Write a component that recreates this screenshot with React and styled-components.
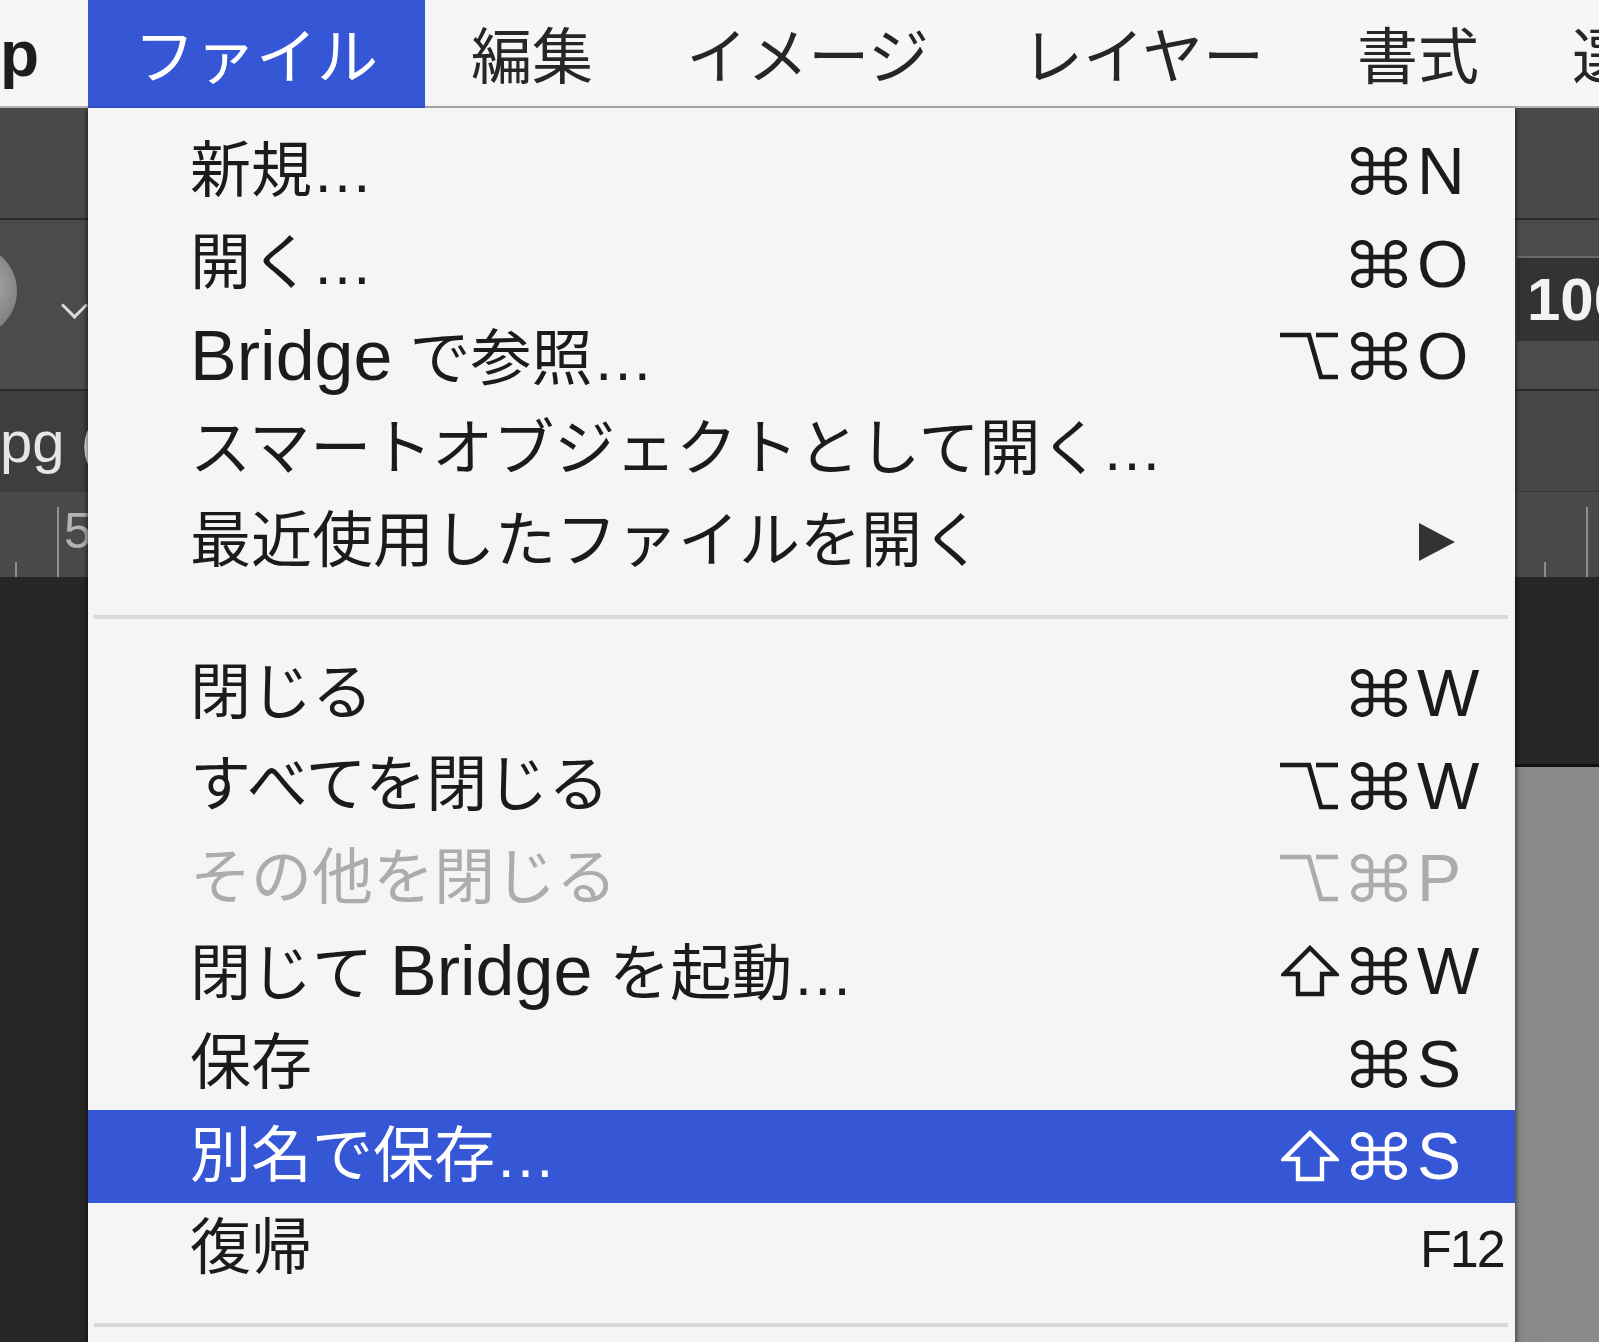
import React from "react";
import styled, { createGlobalStyle } from "styled-components";

const BLUE = "#3556d5";

const menuBarItems = ["編集", "イメージ", "レイヤー", "書式", "選択範囲", "フィルター", "表示"];

function CommandIcon() {
  return (
    <svg width="56" height="48" viewBox="0 0 56 48" fill="none" stroke="currentColor" strokeWidth="4.6">
      <path d="M36 9.625V38.375A8.875 7.375 0 1 0 44.875 31H11.125A8.875 7.375 0 1 0 20 38.375V9.625A8.875 7.375 0 1 0 11.125 17H44.875A8.875 7.375 0 1 0 36 9.625" />
    </svg>
  );
}

function OptionIcon() {
  return (
    <svg width="60" height="50" viewBox="0 0 60 50" fill="none" stroke="currentColor" strokeWidth="4.6">
      <path d="M1 4H30L42 46H59" />
      <path d="M37 4H59" />
    </svg>
  );
}

function ShiftIcon() {
  return (
    <svg width="58" height="52" viewBox="0 0 58 52" fill="none" stroke="currentColor" strokeWidth="4.4" strokeLinejoin="miter">
      <path d="M29 3L55 29H41V49H17V29H3Z" />
    </svg>
  );
}

function SubmenuArrow() {
  return (
    <svg width="40" height="42" viewBox="0 0 40 42">
      <polygon points="2,2 38,21 2,40" fill="#333" />
    </svg>
  );
}

const modIcons = { cmd: CommandIcon, opt: OptionIcon, shift: ShiftIcon };

function App() {
  const groups = getGroups();
  return (
    <>
      <GlobalStyle />
      <Screen>
        <MenuBar>
          <AppName>p</AppName>
          <BarItem $active>
            ファイル
            <Dropdown>
              {groups.map((items, gi) => (
                <React.Fragment key={gi}>
                  {gi > 0 && <Separator />}
                  {items.map((item, i) => (
                    <Row key={i} $active={item.active} $disabled={item.disabled}>
                      <Label>{item.label}</Label>
                      <Mods>
                        {(item.mods || []).map((m) => {
                          const Icon = modIcons[m];
                          return <Icon key={m} />;
                        })}
                      </Mods>
                      <KeyCell>
                        {item.key && <Key>{item.key}</Key>}
                        {item.fn && <FnKey>{item.fn}</FnKey>}
                        {item.submenu && <SubmenuArrow />}
                      </KeyCell>
                    </Row>
                  ))}
                </React.Fragment>
              ))}
            </Dropdown>
          </BarItem>
          {menuBarItems.map((t) => (
            <BarItem key={t}>{t}</BarItem>
          ))}
        </MenuBar>

        <OptionsBar />
        <ToolBar>
          <BrushPicker>
            <BrushDot />
            <Chevron />
          </BrushPicker>
          <ZoomField>100%</ZoomField>
        </ToolBar>
        <TabBar>
          <DocTab>pg (</DocTab>
        </TabBar>
        <Ruler>
          <RulerLabel>5</RulerLabel>
        </Ruler>
        <Canvas>
          <Artwork />
        </Canvas>
      </Screen>
    </>
  );
}

const GlobalStyle = createGlobalStyle`
  html, body {
    margin: 0;
    padding: 0;
  }
  body {
    background: #262626;
    font-family: "Liberation Sans", "Noto Sans CJK JP", sans-serif;
  }
`;

const Screen = styled.div`
  width: 1599px;
  height: 1342px;
  overflow: hidden;
  display: flex;
  flex-direction: column;
  background: #262626;
`;

const MenuBar = styled.div`
  position: relative;
  z-index: 2;
  display: flex;
  flex-shrink: 0;
  height: 108px;
  background: #f6f6f6;
  box-shadow: inset 0 -2px 0 #b2b2b2;
`;

const AppName = styled.div`
  display: flex;
  align-items: center;
  flex-shrink: 0;
  padding-right: 49px;
  font-size: 64px;
  font-weight: 700;
  color: #1d1d1d;
`;

const BarItem = styled.div`
  position: relative;
  display: flex;
  align-items: center;
  flex-shrink: 0;
  padding: 0 47px 4px 46px;
  white-space: nowrap;
  font-size: 61px;
  color: ${(p) => (p.$active ? "#fff" : "#262626")};
  background: ${(p) => (p.$active ? BLUE : "transparent")};
`;

const Dropdown = styled.div`
  position: absolute;
  top: 100%;
  left: 0;
  width: 1427px;
  padding-top: 17px;
  background: #f5f5f5;
  box-shadow: 0 3px 5px 1px rgba(0, 0, 0, 0.6);
`;

const Row = styled.div`
  display: grid;
  grid-template-columns: 1fr auto 84px;
  column-gap: 10px;
  align-items: center;
  height: 92.6px;
  padding: 0 14px 0 102px;
  font-size: 61px;
  color: ${(p) => (p.$active ? "#fff" : p.$disabled ? "#acacac" : "#1b1b1b")};
  background: ${(p) => (p.$active ? BLUE : "transparent")};
`;

const Label = styled.span`
  line-height: 1;
  white-space: nowrap;
`;

const Latin = styled.span`
  font-size: 70px;
`;

const Mods = styled.span`
  display: flex;
  justify-content: flex-end;
  align-items: center;
  gap: 12px;
`;

const KeyCell = styled.span`
  display: flex;
  align-items: center;
`;

const Key = styled.span`
  font-size: 66px;
  line-height: 1;
`;

const FnKey = styled.span`
  margin-left: 3px;
  font-size: 52px;
  letter-spacing: -2px;
  line-height: 1;
`;

const Separator = styled.div`
  height: 59px;
  display: flex;
  align-items: center;
  padding: 0 7px 0 6px;

  &::after {
    content: "";
    flex: 1;
    height: 4px;
    background: #d9d9d9;
  }
`;

const OptionsBar = styled.div`
  flex-shrink: 0;
  height: 110px;
  background: #4a4a4a;
  border-bottom: 2px solid #2b2b2b;
`;

const ToolBar = styled.div`
  flex-shrink: 0;
  display: grid;
  grid-template-columns: 1517px 1fr;
  height: 169px;
  background: #4b4b4b;
  border-bottom: 2px solid #2a2a2a;
`;

const BrushPicker = styled.div`
  display: flex;
  align-items: flex-start;
`;

const BrushDot = styled.div`
  width: 92px;
  height: 92px;
  margin: 25px 0 0 -75px;
  border-radius: 50%;
  background: radial-gradient(circle at 60% 45%, #b5b5b5 0%, #8a8a8a 45%, #5a5a5a 100%);
`;

const Chevron = styled.div`
  width: 16px;
  height: 16px;
  margin: 76px 0 0 48px;
  border-right: 3px solid #dcdcdc;
  border-bottom: 3px solid #dcdcdc;
  transform: rotate(45deg);
`;

const ZoomField = styled.div`
  margin-top: 36px;
  height: 83px;
  display: flex;
  align-items: center;
  padding-left: 10px;
  overflow: hidden;
  white-space: nowrap;
  background: #333;
  border-top: 2px solid #6a6a6a;
  color: #f2f2f2;
  font-size: 60px;
  font-weight: 700;
`;

const TabBar = styled.div`
  flex-shrink: 0;
  display: flex;
  height: 100px;
  background: #474747;
`;

const DocTab = styled.div`
  display: flex;
  align-items: center;
  width: 1000px;
  white-space: nowrap;
  background: #3e3e3e;
  color: #e6e6e6;
  font-size: 58px;
`;

const Ruler = styled.div`
  flex-shrink: 0;
  display: flex;
  align-items: center;
  height: 85px;
  border-top: 1px solid #3a3a3a;
  background:
    linear-gradient(to right, #8e8e8e 2px, transparent 2px) 57px 15px / 382.25px 70px repeat-x,
    linear-gradient(to right, #8e8e8e 2px, transparent 2px) 15px 70px / 382.25px 15px repeat-x,
    #4a4a4a;
`;

const RulerLabel = styled.span`
  margin-left: 64px;
  margin-bottom: 8px;
  color: #b4b4b4;
  font-size: 50px;
`;

const Canvas = styled.div`
  flex: 1;
  display: flex;
  justify-content: flex-end;
  padding-top: 187px;
  background: #262626;
`;

const Artwork = styled.div`
  width: 900px;
  margin-right: -20px;
  border-top: 3px solid #111;
  background: linear-gradient(to right, #6f7173 0%, #7d7f81 60%, #8a8c8e 100%);
`;

function getGroups() {
  return [
    [
      { label: "新規…", mods: ["cmd"], key: "N" },
      { label: "開く…", mods: ["cmd"], key: "O" },
      { label: <><Latin>Bridge</Latin> で参照…</>, mods: ["opt", "cmd"], key: "O" },
      { label: "スマートオブジェクトとして開く…" },
      { label: "最近使用したファイルを開く", submenu: true },
    ],
    [
      { label: "閉じる", mods: ["cmd"], key: "W" },
      { label: "すべてを閉じる", mods: ["opt", "cmd"], key: "W" },
      { label: "その他を閉じる", mods: ["opt", "cmd"], key: "P", disabled: true },
      { label: <>閉じて <Latin>Bridge</Latin> を起動…</>, mods: ["shift", "cmd"], key: "W" },
      { label: "保存", mods: ["cmd"], key: "S" },
      { label: "別名で保存…", mods: ["shift", "cmd"], key: "S", active: true },
      { label: "復帰", fn: "F12" },
    ],
    [],
  ];
}

export default App;
